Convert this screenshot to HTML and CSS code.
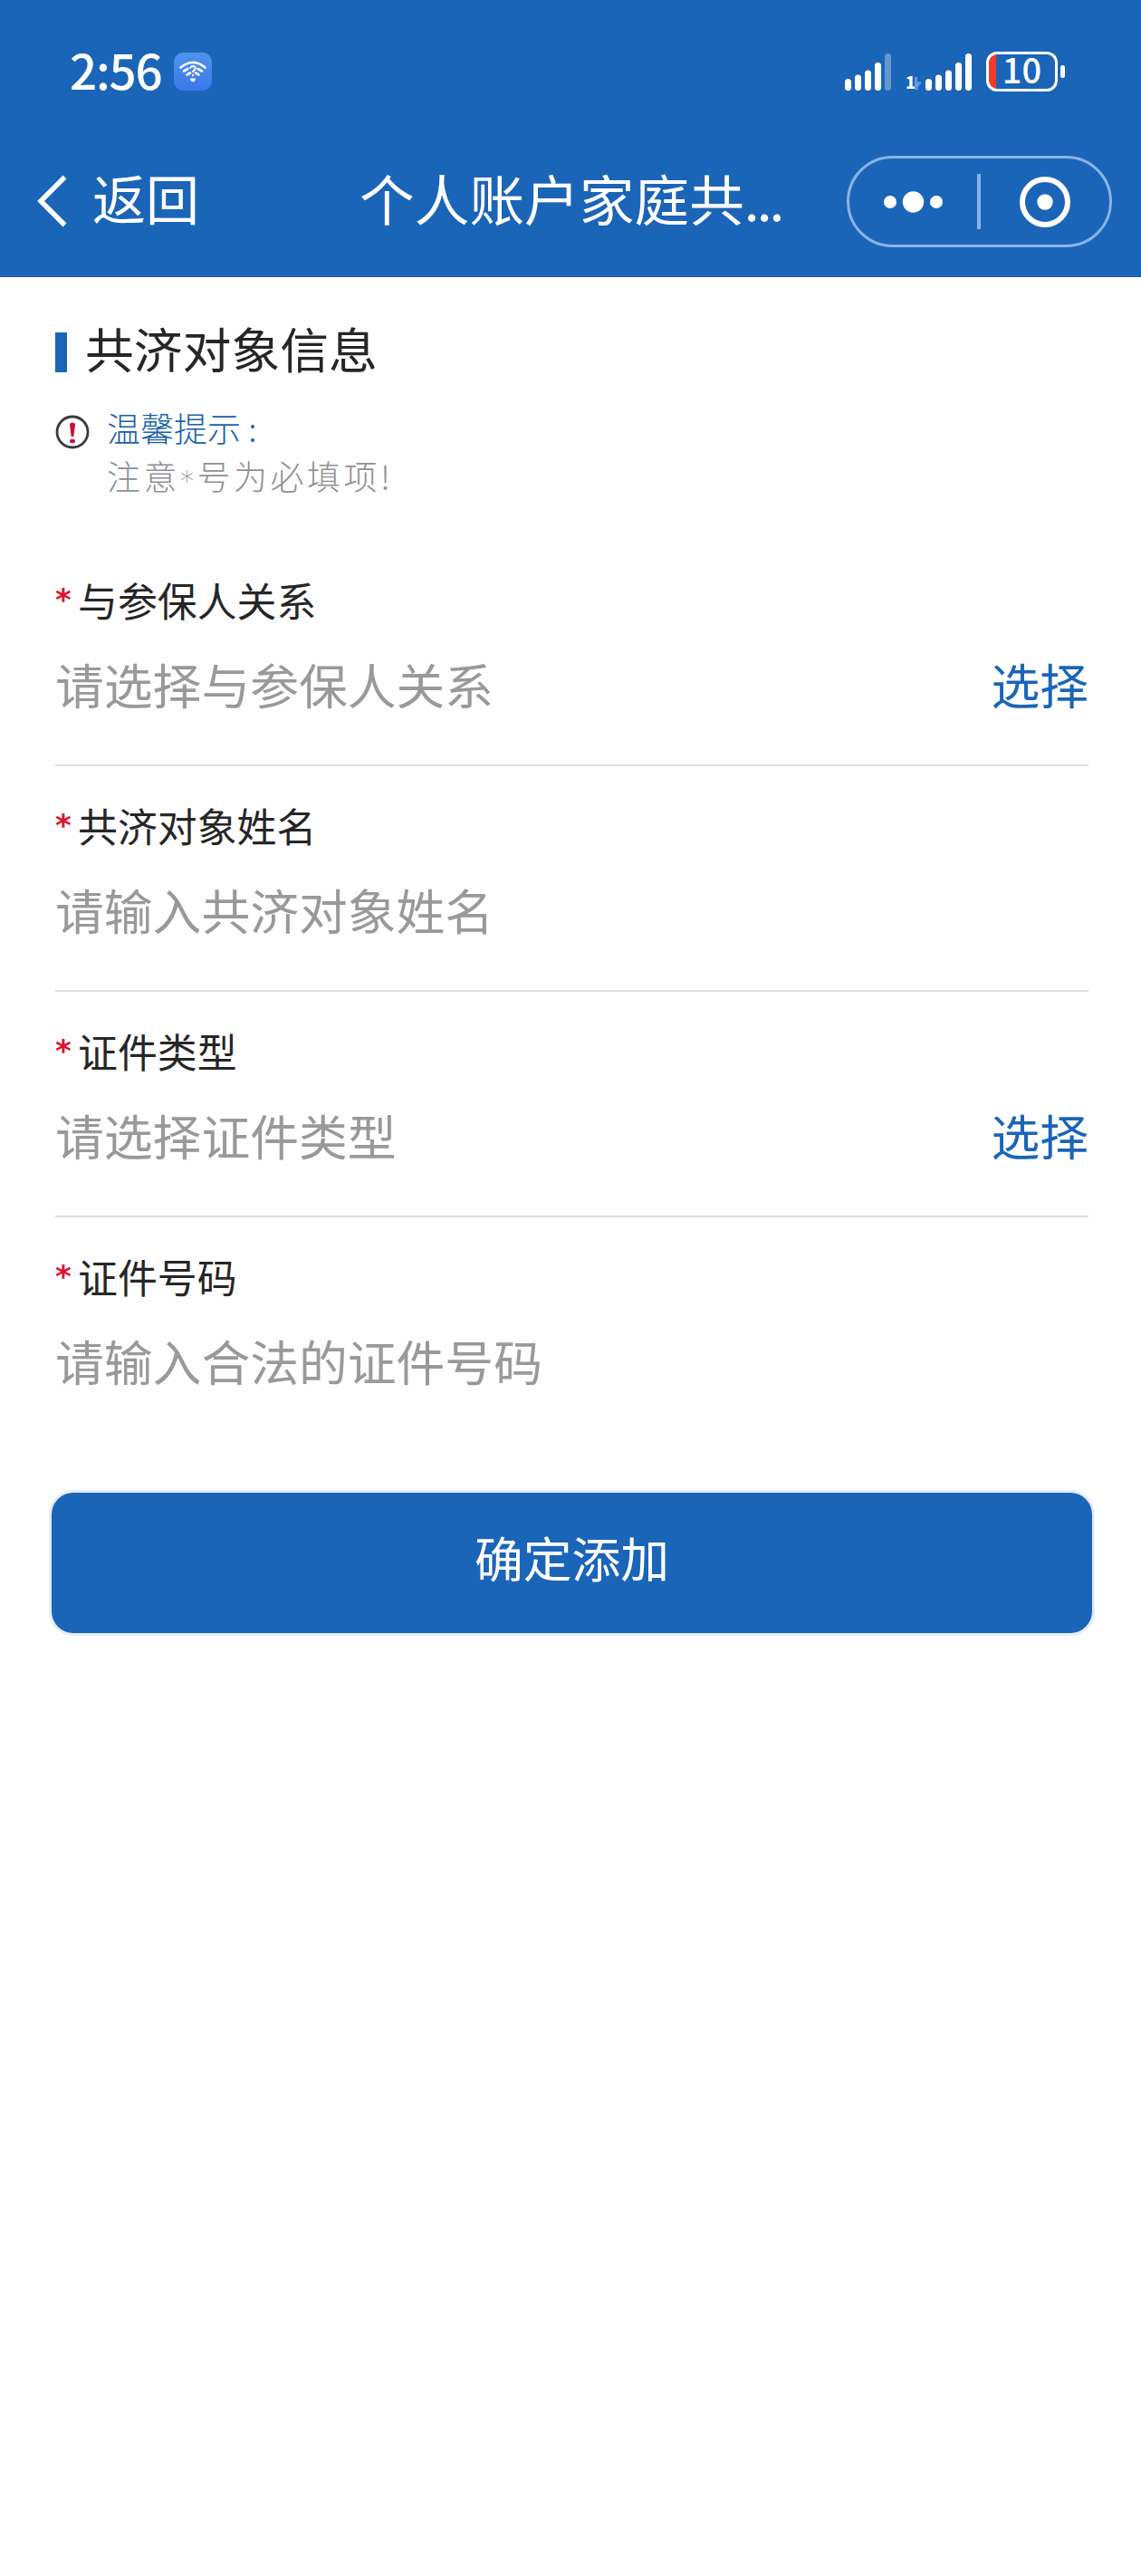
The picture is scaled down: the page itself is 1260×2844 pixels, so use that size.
FILE: index.html
```
<!DOCTYPE html>
<html lang="zh-CN">
<head>
  <meta charset="UTF-8">
  <meta name="viewport" content="width=device-width, initial-scale=1.0">
  <title>个人账户家庭共济</title>
  <link rel="stylesheet" href="styles.css">
</head>
<body>
  <header class="header">
    <div class="status-bar">
      <span class="time">2:56</span>
      <svg class="wifi-badge" width="42" height="42" viewBox="0 0 42 42" fill="none" stroke="#fff">
        <defs>
          <linearGradient id="wifiBg" x1="0" y1="0" x2="0" y2="1">
            <stop offset="0" stop-color="#4f92ec"/>
            <stop offset="1" stop-color="#3b78ea"/>
          </linearGradient>
        </defs>
        <rect width="42" height="42" rx="10" fill="url(#wifiBg)" stroke="none"/>
        <path d="M7.5 16.5Q21 5.500 34.500 16.500" stroke-width="2.600" stroke-linecap="round"/>
        <path d="M11 20.500L15.500 18M14.500 24.500L18 22.500M31 20.500L26.500 18M27.500 24.500L24 22.500" stroke-width="2.600" stroke-linecap="round"/>
        <path d="M18.200 17.500Q18.500 15 21 15Q24 15.200 23.700 17.800Q23 19.500 21.200 20.500V22" stroke-width="2"/>
        <circle cx="21" cy="25" r="1.200" fill="#fff" stroke="none"/>
        <path d="M18 28.500H24L23.500 31L21 32.500L18.500 31Z" fill="#fff" stroke="none"/>
      </svg>
      <div class="status-icons">
        <svg class="signal" width="51" height="42" viewBox="0 0 51 42" fill="#fff">
          <rect x="0" y="28" width="7" height="13" rx="3.500"/>
          <rect x="11" y="23.500" width="7" height="17.500" rx="3.500"/>
          <rect x="22" y="18.500" width="7" height="22.500" rx="3.500"/>
          <rect x="33" y="10" width="7" height="31" rx="3.500"/>
          <rect x="44" y="0" width="7" height="41" rx="3.500" opacity=".32"/>
        </svg>
        <span class="sim">1</span>
        <svg class="arrow" width="8" height="14" viewBox="0 0 8 14" fill="#5f9be0">
          <path d="M0 0H3V5L8 6L3.500 11V14H0Z"/>
        </svg>
        <svg class="signal" width="51" height="42" viewBox="0 0 51 42" fill="#fff">
          <rect x="0" y="28" width="7" height="13" rx="3.500"/>
          <rect x="11" y="23.500" width="7" height="17.500" rx="3.500"/>
          <rect x="22" y="18.500" width="7" height="22.500" rx="3.500"/>
          <rect x="33" y="10" width="7" height="31" rx="3.500"/>
          <rect x="44" y="0" width="7" height="41" rx="3.500"/>
        </svg>
        <div class="battery"><span>10</span></div>
        <i class="battery-cap"></i>
      </div>
    </div>
    <nav class="nav-bar">
      <div class="back">
        <svg width="34" height="58" viewBox="0 0 34 58" fill="none" stroke="#fff" stroke-width="5.500">
          <path d="M31.500 2.500L5 29L31.500 55.500"/>
        </svg>
        <span>返回</span>
      </div>
      <h1 class="nav-title">个人账户家庭共<span class="dots">...</span></h1>
      <div class="capsule">
        <svg class="more" width="66" height="24" viewBox="0 0 66 24" fill="#fff">
          <circle cx="7" cy="12" r="7"/>
          <circle cx="32.500" cy="12" r="11.700"/>
          <circle cx="58" cy="12" r="7"/>
        </svg>
        <i class="capsule-line"></i>
        <svg class="close" width="56" height="56" viewBox="0 0 56 56" fill="none" stroke="#fff">
          <circle cx="28" cy="28" r="25" stroke-width="6"/>
          <circle cx="28" cy="28" r="8.700" fill="#fff" stroke="none"/>
        </svg>
      </div>
    </nav>
  </header>

  <main class="content">
    <h2 class="section-title">共济对象信息</h2>
    <div class="tips">
      <svg class="tips-icon" width="38" height="38" viewBox="0 0 38 38">
        <circle cx="19" cy="19" r="17" fill="none" stroke="#3a3a3c" stroke-width="2.800"/>
        <path d="M16 11Q16 8.500 19 8.500Q22 8.500 22 11L20.300 24H17.700Z" fill="#cc1230"/>
        <ellipse cx="19" cy="29" rx="3" ry="2.200" fill="#cc1230"/>
      </svg>
      <div class="tips-text">
        <p class="tips-head">温馨提示 :</p>
        <p class="tips-body">注意<span class="mark">*</span>号为必填项!</p>
      </div>
    </div>

    <form class="form">
      <div class="field">
        <div class="label"><span class="star">*</span>与参保人关系</div>
        <div class="value"><span class="placeholder">请选择与参保人关系</span><a class="select">选择</a></div>
      </div>
      <div class="field">
        <div class="label"><span class="star">*</span>共济对象姓名</div>
        <div class="value"><span class="placeholder">请输入共济对象姓名</span></div>
      </div>
      <div class="field">
        <div class="label"><span class="star">*</span>证件类型</div>
        <div class="value"><span class="placeholder">请选择证件类型</span><a class="select">选择</a></div>
      </div>
      <div class="field">
        <div class="label"><span class="star">*</span>证件号码</div>
        <div class="value"><span class="placeholder">请输入合法的证件号码</span></div>
      </div>
      <button type="button" class="submit">确定添加</button>
    </form>
  </main>
</body>
</html>
```
FILE: styles.css
```
* { margin: 0; padding: 0; box-sizing: border-box; }
body {
  font-family: "Noto Sans CJK SC", sans-serif;
  background-color: #fefefe;
  color: #262626;
  min-height: 2844px;
}
svg { display: block; flex: none; }

/* header */
.header {
  height: 306px;
  background-color: #1b65b8;
  color: #fff;
}
.status-bar {
  display: flex;
  align-items: center;
  height: 158px;
  padding: 0 84px 0 77px;
}
.time {
  width: 115px;
  font-size: 53px;
  font-weight: 500;
  line-height: 60px;
  letter-spacing: -1.2px;
  margin-top: -7px;
}
.status-icons {
  display: flex;
  align-items: center;
  margin-left: auto;
}
.signal { margin-top: 1px; }
.sim {
  width: 10px;
  margin: 21px 0 0 16px;
  font-size: 18px;
  font-weight: 900;
  line-height: 20px;
}
.arrow { margin: 26px 4px 0 0; }
.battery {
  width: 79px;
  height: 44px;
  margin-left: 16px;
  border: 3.5px solid #fff;
  border-radius: 12px;
  background: linear-gradient(90deg, #f53a2c 8px, transparent 8px);
  display: flex;
  align-items: center;
  justify-content: center;
}
.battery span {
  font-size: 38px;
  font-weight: 500;
  line-height: 38px;
  margin-top: -6px;
}
.battery-cap {
  width: 5px;
  height: 14px;
  margin-left: 3px;
  border-radius: 3px;
  background-color: #fff;
}
.nav-bar {
  display: flex;
  align-items: center;
  height: 129px;
  padding: 0 32px 0 40px;
}
.back {
  display: flex;
  align-items: center;
  width: 357px;
  font-size: 59px;
  line-height: 80px;
}
.back svg { margin-top: -1px; }
.back span { margin: -9px 0 0 28px; }
.nav-title {
  width: 538px;
  font-size: 60.7px;
  font-weight: 400;
  line-height: 80px;
  margin-top: -9px;
  white-space: nowrap;
}
.dots { letter-spacing: -3px; }
.capsule {
  display: flex;
  align-items: center;
  width: 293px;
  height: 101px;
  border: 3px solid #8ab4e6;
  border-radius: 51px;
}
.more { margin-left: 38px; }
.capsule-line {
  width: 4px;
  height: 61px;
  margin-left: 37px;
  background-color: #8ab4e6;
}
.close { margin-left: 43px; }

/* content */
.content { padding: 41px 58px 0 61px; }
.section-title {
  display: flex;
  align-items: center;
  height: 80px;
  font-size: 53.8px;
  font-weight: 400;
  line-height: 74px;
  padding-bottom: 6px;
}
.section-title::before {
  content: "";
  width: 13px;
  height: 44px;
  margin: 10px 20px 0 0;
  background-color: #1b65b8;
}
.tips {
  display: flex;
  align-items: flex-start;
  padding-top: 18px;
}
.tips-icon { margin: 13px 0 0; }
.tips-text {
  margin: 1px 0 0 19px;
  font-size: 37px;
  font-weight: 300;
  line-height: 53px;
}
.tips-head { color: #1b5fa8; }
.tips-body {
  color: #909094;
  letter-spacing: 3.5px;
}
.mark {
  font-family: "DejaVu Sans", sans-serif;
  font-size: 30px;
  line-height: 1;
}

/* form */
.form { margin-top: 45px; }
.field {
  height: 249px;
  padding-top: 35px;
  border-bottom: 2px solid #dedede;
}
.field:nth-child(4) { border-bottom: none; }
.label {
  display: flex;
  font-size: 43.9px;
  line-height: 60px;
}
.star {
  width: 25px;
  color: #dc1434;
  font-family: "DejaVu Sans", sans-serif;
  font-size: 34px;
  font-weight: 700;
}
.value {
  display: flex;
  justify-content: space-between;
  margin-top: 24px;
  font-size: 53.8px;
  line-height: 78px;
}
.placeholder { color: #999; }
.select { color: #1b65b8; }
.submit {
  display: block;
  width: 1149px;
  height: 155px;
  margin: 55px 0 0 -4px;
  padding-bottom: 14px;
  border: none;
  border-radius: 24px;
  box-shadow: 0 0 0 3px #e4edf8;
  background-color: #1b65b8;
  color: #fff;
  font-family: inherit;
  font-size: 53.8px;
}
```
